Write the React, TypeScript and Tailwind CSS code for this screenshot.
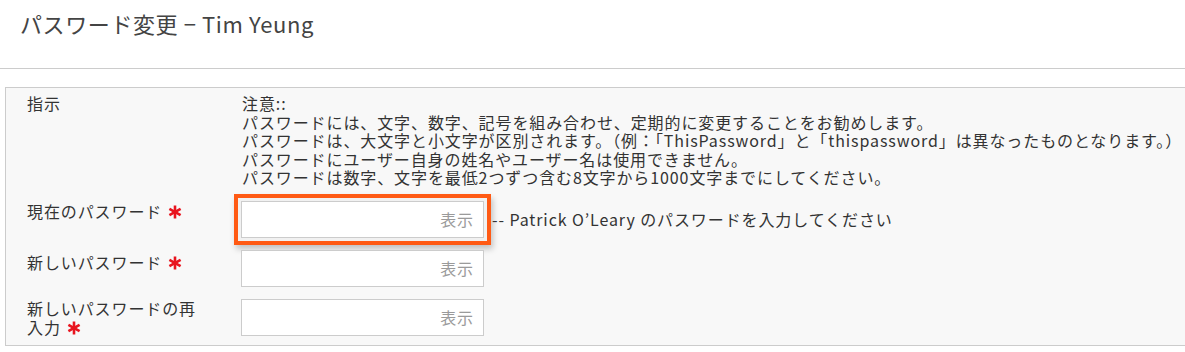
import React from 'react';

const notes = [
  '注意::',
  'パスワードには、文字、数字、記号を組み合わせ、定期的に変更することをお勧めします。',
  'パスワードは、大文字と小文字が区別されます。（例：「ThisPassword」と「thispassword」は異なったものとなります。）',
  'パスワードにユーザー自身の姓名やユーザー名は使用できません。',
  'パスワードは数字、文字を最低2つずつ含む8文字から1000文字までにしてください。',
];

// red required marker, drawn since the glyph in the fonts we have is too small
const Required = () => (
  <svg viewBox="0 0 14 14" className="ml-[6px] inline-block h-[14px] w-[14px] align-[-1px]">
    <g stroke="#e8141e" strokeWidth="2.6" strokeLinecap="butt">
      <line x1="7" y1="0.5" x2="7" y2="13.5" />
      <line x1="1.4" y1="3.8" x2="12.6" y2="10.2" />
      <line x1="1.4" y1="10.2" x2="12.6" y2="3.8" />
    </g>
  </svg>
);

const PasswordInput = ({ focused }: { focused?: boolean }) => (
  <div
    className={
      'flex h-[37px] w-[243px] shrink-0 items-center justify-end border border-[#cccccc] bg-white pr-[9px] ' +
      (focused
        ? 'shadow-[0_0_0_3px_#f1f1f1,0_0_0_7px_#ff5a14,2px_4px_6px_7px_rgba(0,0,0,0.22)]'
        : '')
    }
  >
    <span className="text-[16px] text-[#9a9a9a]">表示</span>
  </div>
);

export default function App() {
  return (
    <div
      className="min-h-[352px] w-[1185px] overflow-hidden bg-white text-[#333333]"
      style={{ fontFamily: '"Noto Sans CJK JP", "Noto Sans", sans-serif' }}
    >
      <div className="flex h-[69px] items-start border-b border-[#cccccc] pl-[20px] pt-[8px]">
        <h1 className="text-[22px] leading-[30px] font-normal tracking-[0.6px] text-[#444444]">
          パスワード変更 − Tim Yeung
        </h1>
      </div>

      <div className="mt-[18px] ml-[5px] w-[1200px] border border-[#cccccc] bg-[#f8f8f8] pb-[8px] pt-[6px] text-[16px] leading-[18.5px] tracking-[0.9px]">
        <div className="flex">
          <div className="w-[236px] shrink-0 pl-[21px]">指示</div>
          <div className="flex flex-col">
            {notes.map((n) => (
              <div key={n} className="whitespace-nowrap">{n}</div>
            ))}
          </div>
        </div>

        <div className="mt-[14px] flex flex-col gap-[12px]">
          <div className="flex items-start">
            <div className="w-[235px] shrink-0 pl-[21px] pt-[1px]">
              現在のパスワード
              <Required />
            </div>
            <PasswordInput focused />
            <div className="ml-[8px] self-center whitespace-nowrap">-- Patrick O’Leary のパスワードを入力してください</div>
          </div>

          <div className="flex items-start">
            <div className="w-[235px] shrink-0 pl-[21px] pt-[3px]">
              新しいパスワード
              <Required />
            </div>
            <PasswordInput />
          </div>

          <div className="flex items-start">
            <div className="w-[235px] shrink-0 pl-[21px] pr-[36px] pt-0 leading-[19px]">
              新しいパスワードの再入力
              <Required />
            </div>
            <PasswordInput />
          </div>
        </div>
      </div>
    </div>
  );
}
